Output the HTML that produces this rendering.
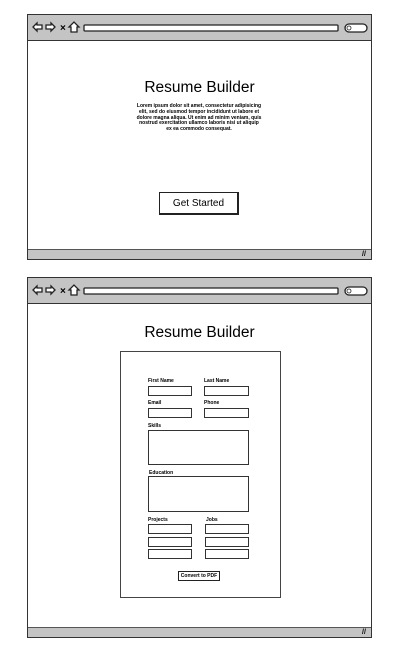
<!DOCTYPE html>
<html><head><style>
body{margin:0;width:417px;height:660px;background:#fff;position:relative;font-family:"Liberation Sans",sans-serif;overflow:hidden}
.a{position:absolute;box-sizing:border-box}
.frame{border:1.5px solid #333;background:#fff}
.bar{background:#c4c4c4;border-bottom:1.5px solid #333}
.inp{border:1px solid #333;border-bottom-width:1.5px;background:#fff}
.lbl{font-size:5px;color:#000;font-weight:bold}
</style></head><body>

<!-- frame 1 -->
<div class="a frame" style="left:27px;top:14px;width:345px;height:246px"></div>
<div class="a bar" style="left:28px;top:15px;width:343px;height:26px"></div>
<div class="a" style="left:28px;top:249px;width:343px;height:10px;background:#c4c4c4;border-top:1px solid #555"></div>
<svg class="a" style="left:28px;top:15px" width="343" height="26">
<path d="M5 12 L9 8 L9 10 L14 10 L14 14 L9 14 L9 16 Z" fill="#fff" stroke="#222" stroke-width="1.3"/>
<path d="M27 12 L23 8 L23 10 L18 10 L18 14 L23 14 L23 16 Z" fill="#fff" stroke="#222" stroke-width="1.3"/>
<text x="32" y="16" font-size="10" font-weight="bold" font-family="Liberation Sans">×</text>
<path d="M43 17 L43 12 L41 12 L46 7 L51 12 L49 12 L49 17 Z" fill="#fff" stroke="#222" stroke-width="1.3"/>
<rect x="56" y="10" width="254" height="6" rx="1" fill="#fff" stroke="#222" stroke-width="1.3"/>
<rect x="317" y="9" width="22" height="8" rx="4" fill="#fff" stroke="#222" stroke-width="1.3"/>
<circle cx="321" cy="13" r="2" fill="none" stroke="#222" stroke-width="0.8"/>
</svg>
<div class="a" style="left:28px;top:79px;width:343px;text-align:center;font-size:15.5px">Resume Builder</div>
<div class="a" style="left:136px;top:104px;width:126px;text-align:center;font-size:5px;line-height:5.8px;font-weight:bold">Lorem ipsum dolor sit amet, consectetur adipisicing elit, sed do eiusmod tempor incididunt ut labore et dolore magna aliqua. Ut enim ad minim veniam, quis nostrud exercitation ullamco laboris nisi ut aliquip ex ea commodo consequat.</div>
<div class="a" style="left:159px;top:192px;width:80px;height:23px;border:1px solid #222;border-right-width:2px;border-bottom-width:2px;text-align:center;line-height:21px;font-size:10px">Get Started</div>
<div class="a" style="left:362px;top:251px;font-size:7px;font-weight:bold">//</div>

<!-- frame 2 -->
<div class="a frame" style="left:27px;top:277px;width:345px;height:361px"></div>
<div class="a bar" style="left:28px;top:278px;width:343px;height:26px"></div>
<div class="a" style="left:28px;top:627px;width:343px;height:10px;background:#c4c4c4;border-top:1px solid #555"></div>
<svg class="a" style="left:28px;top:278px" width="343" height="26">
<path d="M5 12 L9 8 L9 10 L14 10 L14 14 L9 14 L9 16 Z" fill="#fff" stroke="#222" stroke-width="1.3"/>
<path d="M27 12 L23 8 L23 10 L18 10 L18 14 L23 14 L23 16 Z" fill="#fff" stroke="#222" stroke-width="1.3"/>
<text x="32" y="16" font-size="10" font-weight="bold" font-family="Liberation Sans">×</text>
<path d="M43 17 L43 12 L41 12 L46 7 L51 12 L49 12 L49 17 Z" fill="#fff" stroke="#222" stroke-width="1.3"/>
<rect x="56" y="10" width="254" height="6" rx="1" fill="#fff" stroke="#222" stroke-width="1.3"/>
<rect x="317" y="9" width="22" height="8" rx="4" fill="#fff" stroke="#222" stroke-width="1.3"/>
<circle cx="321" cy="13" r="2" fill="none" stroke="#222" stroke-width="0.8"/>
</svg>
<div class="a" style="left:362px;top:629px;font-size:7px;font-weight:bold">//</div>
<div class="a" style="left:28px;top:324px;width:343px;text-align:center;font-size:15.5px">Resume Builder</div>

<div class="a" style="left:120px;top:351px;width:161px;height:247px;border:1px solid #444"></div>
<div class="a lbl" style="left:148px;top:378px">First Name</div>
<div class="a lbl" style="left:204px;top:378px">Last Name</div>
<div class="a inp" style="left:148px;top:386px;width:44px;height:10px"></div>
<div class="a inp" style="left:204px;top:386px;width:45px;height:10px"></div>
<div class="a lbl" style="left:148px;top:400px">Email</div>
<div class="a lbl" style="left:204px;top:400px">Phone</div>
<div class="a inp" style="left:148px;top:408px;width:44px;height:10px"></div>
<div class="a inp" style="left:204px;top:408px;width:45px;height:10px"></div>
<div class="a lbl" style="left:148px;top:423px">Skills</div>
<div class="a inp" style="left:148px;top:430px;width:101px;height:35px"></div>
<div class="a lbl" style="left:149px;top:470px">Education</div>
<div class="a inp" style="left:148px;top:476px;width:101px;height:36px"></div>
<div class="a lbl" style="left:148px;top:517px">Projects</div>
<div class="a lbl" style="left:206px;top:517px">Jobs</div>
<div class="a inp" style="left:148px;top:524px;width:44px;height:10px"></div>
<div class="a inp" style="left:148px;top:537px;width:44px;height:10px"></div>
<div class="a inp" style="left:148px;top:549px;width:44px;height:10px"></div>
<div class="a inp" style="left:205px;top:524px;width:44px;height:10px"></div>
<div class="a inp" style="left:205px;top:537px;width:44px;height:10px"></div>
<div class="a inp" style="left:205px;top:549px;width:44px;height:10px"></div>
<div class="a" style="left:178px;top:571px;width:42px;height:10px;border:1px solid #222;border-right-width:1.5px;border-bottom-width:1.5px;font-size:5px;text-align:center;line-height:8px;font-weight:bold">Convert to PDF</div>
</body></html>
